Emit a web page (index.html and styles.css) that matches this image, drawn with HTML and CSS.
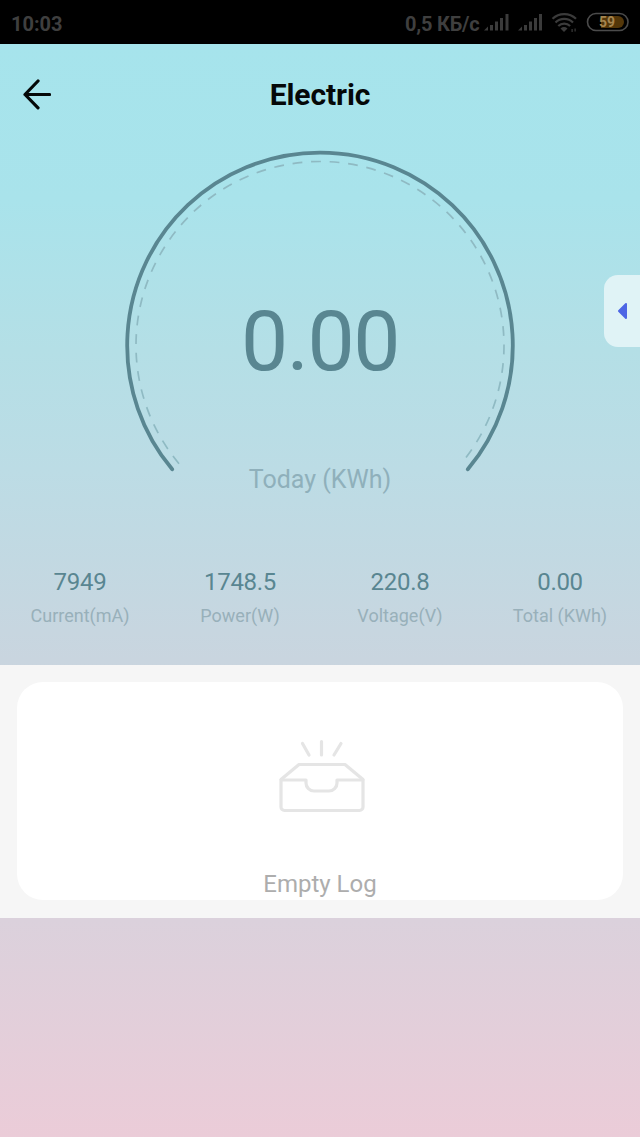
FILE: index.html
```html
<!DOCTYPE html>
<html lang="en">
<head>
<meta charset="utf-8">
<title>Electric</title>
<link rel="stylesheet" href="styles.css">
</head>
<body>
<div class="screen">
  <div class="status">
    <span class="time">10:03</span>
    <span class="speed">0,5 КБ/с</span>
    <svg class="status-icons" width="156" height="44" viewBox="484 0 156 44">
      <g fill="#3b3b3b">
        <path d="M484 30.500l4-4v4zM490 25h3v5.500h-3zM495 21.500h3v9h-3zM500 18h3v12.500h-3zM505.500 14h3v16.500h-3z"/>
        <path d="M518 30.500l4-4v4zM524 25h3v5.500h-3zM529 21.500h3v9h-3zM534 18h3v12.500h-3zM539 14h3v16.500h-3z"/>
        <path d="M560.500 28.500a5.500 5.500 0 0 1 7 0L564 32z"/>
        <path d="M571.500 29h1.200v3h-1.200zM574.500 28.500h1.200v3h-1.200z"/>
      </g>
      <g fill="none" stroke="#3b3b3b" stroke-width="2.200">
        <path d="M552.500 18.800a17 17 0 0 1 23.500 0M555.500 22.500a12.500 12.500 0 0 1 17.500 0M558.300 26a8.500 8.500 0 0 1 11.800 0"/>
        <rect x="587.500" y="13.500" width="40.500" height="17" rx="8.500" stroke="#4b4b4b" stroke-width="1.600"/>
      </g>
      <path fill="#543709" d="M601 16h17a6 6 0 0 1 0 12h-17z"/>
      <text class="battery" x="599" y="27">59</text>
    </svg>
  </div>

  <div class="hero">
    <div class="header">
      <svg class="back" width="30" height="32" viewBox="0 0 30 32" fill="none" stroke="#050808" stroke-width="3.200" stroke-linecap="round" stroke-linejoin="round">
        <path d="M17 3L4 16.500l13 13.300M4 16.500h24.500"/>
      </svg>
      <h1 class="title">Electric</h1>
    </div>
    <div class="gauge">
      <svg class="dial" width="400" height="340" viewBox="120 146 400 340" fill="none">
        <path d="M172.200 469.300A192.800 192.800 0 1 1 467.800 469.300" stroke="#598691" stroke-width="3.800" stroke-linecap="round"/>
        <path d="M179 463.700A184 184 0 1 1 461 463.700" stroke="#8fbac3" stroke-width="1.700" stroke-dasharray="9.800 8.760"/>
      </svg>
      <div class="reading">0.00</div>
      <div class="caption">Today (KWh)</div>
    </div>
    <div class="stats">
      <div class="stat"><div class="value">7949</div><div class="label">Current(mA)</div></div>
      <div class="stat"><div class="value">1748.5</div><div class="label">Power(W)</div></div>
      <div class="stat"><div class="value">220.8</div><div class="label">Voltage(V)</div></div>
      <div class="stat"><div class="value">0.00</div><div class="label">Total (KWh)</div></div>
    </div>
    <div class="drawer">
      <svg width="11" height="18" viewBox="0 0 11 18"><path d="M2 9L9 2v14z" fill="#4d66e5" stroke="#4d66e5" stroke-width="2" stroke-linejoin="round"/></svg>
    </div>
  </div>

  <div class="log">
    <div class="card">
      <svg class="tray" width="90" height="76" viewBox="277 738 90 76" fill="none" stroke="#e5e5e5" stroke-width="3.200" stroke-linecap="round" stroke-linejoin="round">
        <path d="M302.500 743.500l6.500 11.500M321.500 741.500v13.500M341 743.500l-7 11.500"/>
        <path d="M281 779.500L299 764.500h46L363 779.500"/>
        <path d="M281 780h25v3a8 8 0 0 0 8 8h15a8 8 0 0 0 8-8v-3h26v27a3.500 3.500 0 0 1-3.500 3.500h-75a3.500 3.500 0 0 1-3.500-3.500z"/>
      </svg>
      <div class="empty">Empty Log</div>
    </div>
  </div>
</div>
</body>
</html>
```
FILE: styles.css
```css
* { box-sizing: border-box; }

body {
  margin: 0;
  font-family: Roboto, "Liberation Sans", sans-serif;
}

.screen {
  width: 640px;
  height: 1137px;
  overflow: hidden;
  background: linear-gradient(#a6e4ec 44px, #a9e3eb 200px, #b4dfe6 350px, #bcdce5 470px, #c9d5df 660px, #dbd1dc 920px, #ebccd8 1137px);
}

.status {
  display: flex;
  align-items: center;
  height: 44px;
  padding-left: 11px;
  background: #000;
  color: #3f3f3f;
  font-size: 20px;
  font-weight: 500;
  line-height: 44px;
}

.time { font-weight: 700; padding-top: 3px; }
.speed { width: 79px; margin-left: auto; padding-top: 3px; font-weight: 700; letter-spacing: -0.2px; white-space: nowrap; }
.status-icons { flex: none; }
.battery { fill: #a58550; font-size: 14px; font-weight: 700; }

.hero {
  position: relative;
  height: 621px;
}

.header {
  display: grid;
  grid-template-columns: 84px 1fr 84px;
  align-items: center;
  height: 102px;
}

.back { margin-left: 21px; margin-top: -3px; }

.title {
  margin: 0;
  text-align: center;
  font-size: 30px;
  font-weight: 700;
  letter-spacing: -0.1px;
  line-height: 36px;
  color: #050808;
}

.gauge {
  display: grid;
  justify-items: center;
  height: 418px;
  grid-template-rows: 340px;
}

.dial, .reading, .caption { grid-area: 1 / 1; }

.reading {
  padding-top: 147px;
  font-size: 84px;
  letter-spacing: -1.4px;
  line-height: 98px;
  color: #598691;
}

.caption {
  padding-top: 319px;
  font-size: 25px;
  line-height: 30px;
  color: #8fb0bb;
}

.stats {
  display: grid;
  grid-template-columns: repeat(4, 160px);
  text-align: center;
}

.value {
  font-size: 24px;
  letter-spacing: -0.3px;
  line-height: 36px;
  color: #598691;
}

.label {
  font-size: 18px;
  line-height: 32px;
  color: #98b0ba;
}

.drawer {
  position: absolute;
  right: 0;
  top: 231px;
  display: flex;
  align-items: center;
  width: 36px;
  height: 72px;
  padding-left: 13px;
  border-radius: 14px 0 0 14px;
  background: #e0f3f6;
}

.log {
  height: 253px;
  padding: 17px 17px 18px;
  background: #f6f6f6;
}

.card {
  display: flex;
  flex-direction: column;
  align-items: center;
  height: 218px;
  padding-top: 56px;
  border-radius: 26px;
  background: #fff;
}

.tray { margin-left: 4px; }

.empty {
  margin-top: 55px;
  font-size: 24px;
  line-height: 30px;
  color: #adadad;
}
```
